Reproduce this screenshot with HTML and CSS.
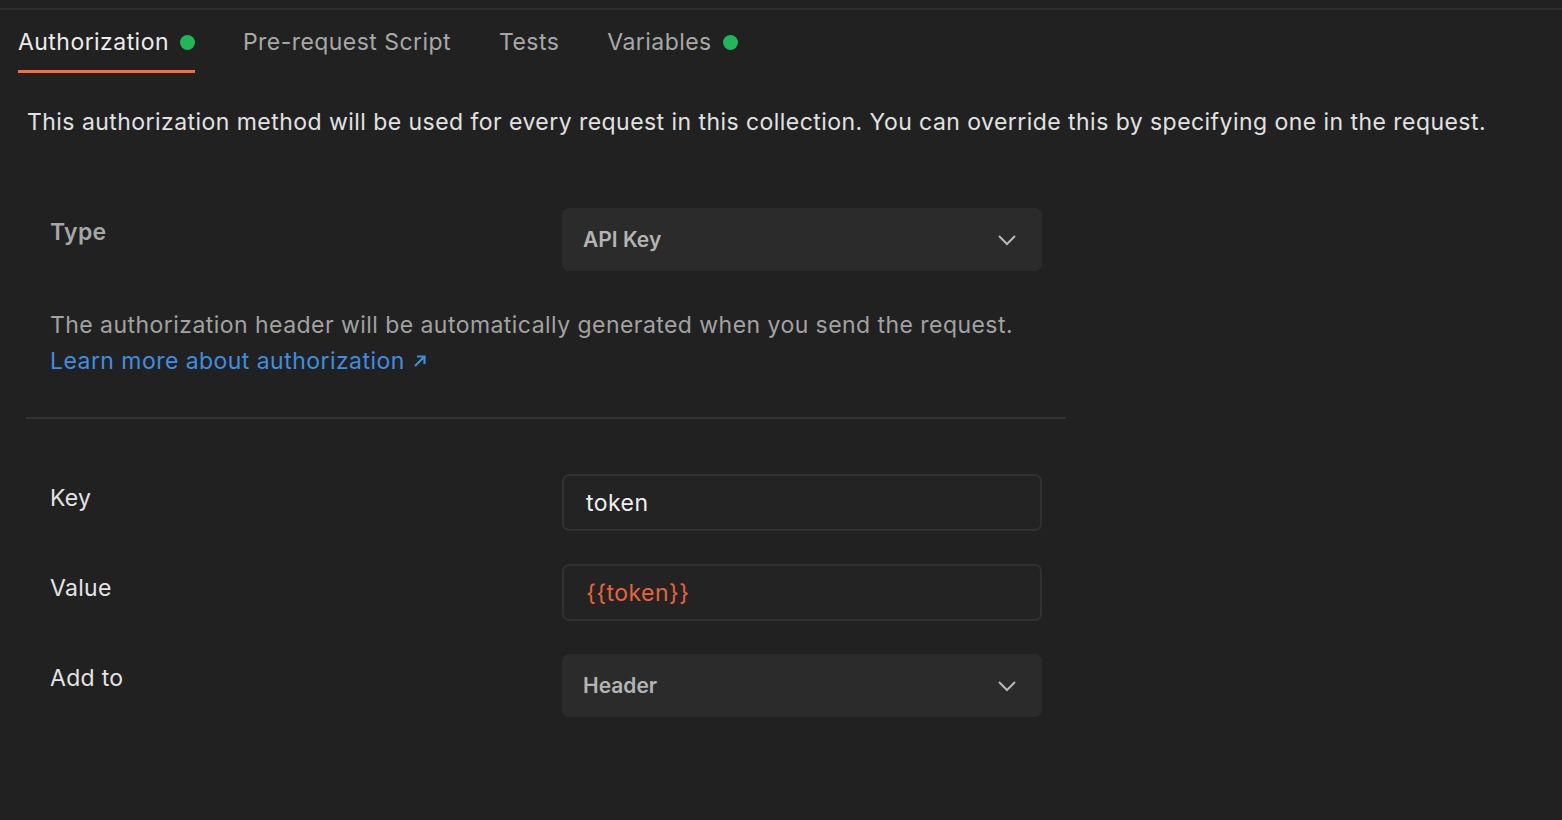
FILE: index.html
```html
<!DOCTYPE html>
<html lang="en">
<head>
<meta charset="utf-8">
<title>Authorization</title>
<link rel="stylesheet" href="styles.css">
</head>
<body>
<div class="topbar"></div>
<nav class="tabs">
  <div class="tab active">Authorization<span class="dot"></span></div>
  <div class="tab">Pre-request Script</div>
  <div class="tab">Tests</div>
  <div class="tab">Variables<span class="dot"></span></div>
</nav>
<p class="desc">This authorization method will be used for every request in this collection. You can override this by specifying one in the request.</p>
<section class="auth">
  <div class="row type-row">
    <div class="label strong">Type</div>
    <div class="select">
      <span>API Key</span>
      <svg class="chev" width="20" height="12" viewBox="0 0 20 12"><path d="M2 2 L10 10 L18 2" fill="none" stroke="#b8b8b8" stroke-width="2"/></svg>
    </div>
  </div>
  <div class="help">
    <div class="help-text">The authorization header will be automatically generated when you send the request.</div>
    <a class="link">Learn more about authorization <svg class="arrow" width="14" height="14" viewBox="0 0 14 14"><path d="M2 12 L11.5 2.5 M4 2.5 H11.5 V10" fill="none" stroke="#3f8ee0" stroke-width="2.2"/></svg></a>
  </div>
  <div class="divider"></div>
  <div class="fields">
    <div class="row">
      <div class="label">Key</div>
      <div class="input"><span>token</span></div>
    </div>
    <div class="row">
      <div class="label">Value</div>
      <div class="input"><span class="var">{{token}}</span></div>
    </div>
    <div class="row">
      <div class="label">Add to</div>
      <div class="select">
        <span>Header</span>
        <svg class="chev" width="20" height="12" viewBox="0 0 20 12"><path d="M2 2 L10 10 L18 2" fill="none" stroke="#b8b8b8" stroke-width="2"/></svg>
      </div>
    </div>
  </div>
</section>
</body>
</html>
```
FILE: styles.css
```css
html, body {
  margin: 0;
  padding: 0;
  background: #212121;
  font-family: Inter, "Noto Sans", sans-serif;
  color: #e6e6e6;
  height: 100%;
}

.topbar {
  height: 8px;
  border-bottom: 2px solid #2e2e2e;
}

.tabs {
  display: flex;
  gap: 48px;
  padding-left: 18px;
}

.tab {
  display: flex;
  align-items: center;
  gap: 11px;
  font-size: 23px;
  letter-spacing: 0.45px;
  line-height: 22px;
  padding: 21px 0 17px;
  color: #a8a8a8;
  border-bottom: 3px solid transparent;
}

.tab.active {
  color: #ececec;
  border-bottom-color: #ff6c37;
}

.dot {
  width: 15px;
  height: 15px;
  border-radius: 50%;
  background: #1fb75a;
}

.desc {
  margin: 36px 0 0 27px;
  font-size: 23px;
  letter-spacing: 0.45px;
  line-height: 26px;
  color: #e2e2e2;
}

.auth {
  width: 1040px;
  margin-left: 26px;
  padding-top: 73px;
}

.row {
  display: grid;
  grid-template-columns: 512px 480px;
  padding-left: 24px;
}

.label {
  font-size: 23px;
  letter-spacing: 0.3px;
  line-height: 26px;
  padding-top: 11px;
  color: #e4e4e4;
}

.label.strong {
  font-weight: 600;
  color: #a6a6a6;
}

.select {
  height: 63px;
  box-sizing: border-box;
  background: #2b2b2b;
  border-radius: 7px;
  display: flex;
  align-items: center;
  justify-content: space-between;
  padding: 0 25px 0 21px;
  font-size: 21px;
  font-weight: 600;
  color: #b4b4b4;
}

.chev {
  display: block;
}

.help {
  padding: 36px 0 0 24px;
  font-size: 23px;
  letter-spacing: 0.45px;
  line-height: 36px;
}

.help-text {
  color: #a2a2a2;
}

.link {
  color: #3d8fe2;
  display: inline-flex;
  align-items: center;
  gap: 8px;
}

.divider {
  margin-top: 38px;
  height: 2px;
  background: #333333;
}

.fields {
  display: flex;
  flex-direction: column;
  gap: 33px;
  padding-top: 55px;
}

.input {
  height: 57px;
  box-sizing: border-box;
  border: 2px solid #303030;
  background: #232323;
  border-radius: 7px;
  display: flex;
  align-items: center;
  padding: 1px 22px 0;
  font-size: 23px;
  letter-spacing: 0.45px;
  color: #f0f0f0;
}

.var {
  color: #e8643a;
}
```
